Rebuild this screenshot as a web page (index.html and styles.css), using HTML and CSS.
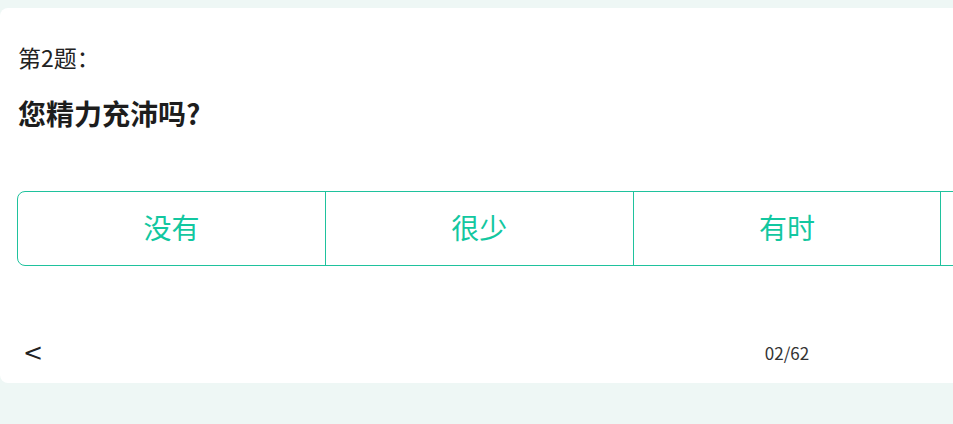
FILE: index.html
```html
<!DOCTYPE html>
<html lang="zh-CN">
<head>
<meta charset="utf-8">
<link rel="stylesheet" href="styles.css">
</head>
<body>
<div class="card">
  <div class="q-num">第2题：</div>
  <div class="q-title">您精力充沛吗?</div>
  <div class="options">
    <div class="opt">没有</div>
    <div class="opt">很少</div>
    <div class="opt">有时</div>
    <div class="opt">经常</div>
    <div class="opt">总是</div>
  </div>
  <div class="footer">
    <div class="prev">&lt;</div>
    <div class="count">02/62</div>
    <div class="spacer"></div>
  </div>
</div>
</body>
</html>
```
FILE: styles.css
```css
html, body {
  margin: 0;
  padding: 0;
  background: #eef7f5;
  overflow: hidden;
}
body {
  padding-top: 8px;
  font-family: "Noto Sans CJK SC", "Noto Sans", sans-serif;
  color: #222;
}
.card {
  width: 1574px;
  height: 375px;
  box-sizing: border-box;
  background: #fff;
  border-radius: 8px;
  padding: 33px 17px 0 17px;
  display: flex;
  flex-direction: column;
}
.q-num {
  font-size: 23px;
  line-height: 32px;
  padding-left: 1px;
  color: #222;
}
.q-title {
  margin-top: 21px;
  font-size: 28px;
  line-height: 38px;
  font-weight: 700;
  padding-left: 1px;
  color: #1d1d1d;
}
.options {
  margin-top: 59px;
  display: flex;
  border: 1px solid #1fc29d;
  border-radius: 8px;
  height: 75px;
  box-sizing: border-box;
  flex-shrink: 0;
}
.opt {
  flex: 1;
  display: flex;
  align-items: center;
  justify-content: center;
  font-size: 28px;
  color: #12c7a0;
  border-left: 1px solid #1fc29d;
  padding-bottom: 3px;
}
.opt:first-child {
  border-left: none;
}
.footer {
  margin-top: 72px;
  display: grid;
  grid-template-columns: 1fr auto 1fr;
  align-items: center;
}
.prev {
  font-family: "DejaVu Sans", sans-serif;
  font-size: 24px;
  padding-left: 6px;
  color: #222;
  line-height: 30px;
}
.count {
  font-size: 17px;
  color: #333;
  padding-bottom: 2px;
}
```
